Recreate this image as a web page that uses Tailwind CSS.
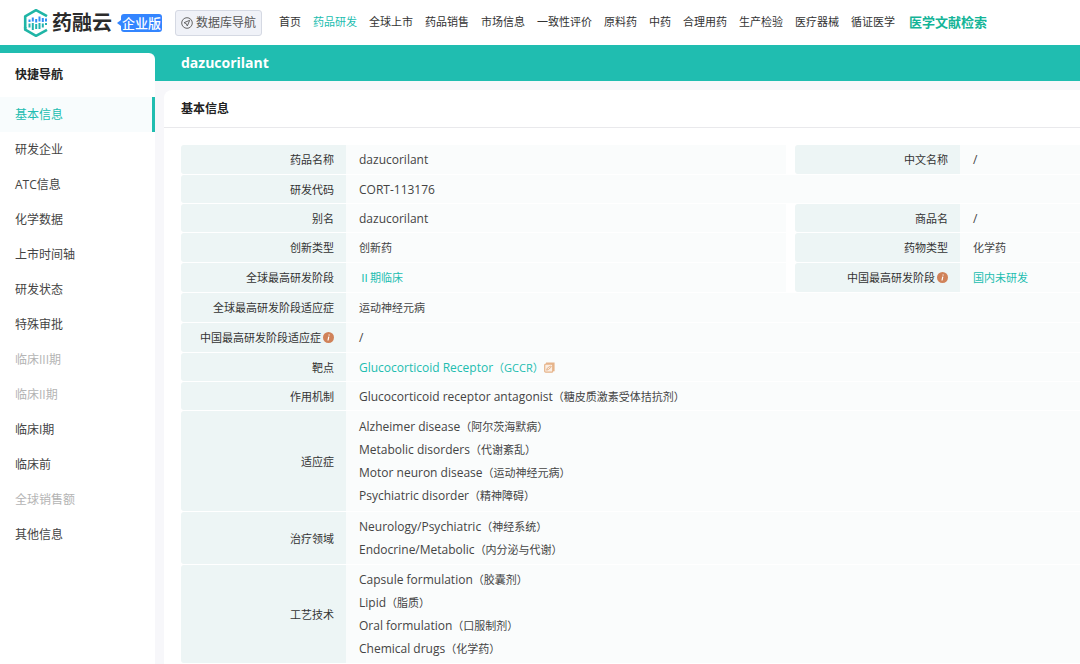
<!DOCTYPE html>
<html lang="zh-CN">
<head>
<meta charset="utf-8">
<meta name="viewport" content="width=device-width, initial-scale=1">
<title>dazucorilant</title>
<script src="https://cdn.jsdelivr.net/npm/@tailwindcss/browser@4"></script>
</head>
<body class="flex min-h-screen flex-col overflow-x-hidden bg-[#f7f7fa] font-['Open_Sans','Noto_Sans_CJK_SC',sans-serif] text-[12px] text-[#444]">
<header class="flex h-[45px] items-center whitespace-nowrap bg-white pl-[22px]">
  <a href="#" class="flex items-center" aria-label="药融云">
    <svg class="h-[30px] w-[28px]" viewBox="0 0 28 30" fill="none">
      <path d="M3.200 20.500V8.300L14 2.200l11 6" stroke="#1fb5a6" stroke-width="2.600" stroke-linejoin="round"/>
      <path d="M3.200 19v2.700L14 27.800l11-6" stroke="#1fb5a6" stroke-width="2.600" stroke-linejoin="round"/>
      <path d="M7.500 11.500v2.500M10.800 9.500v4M14.200 11v3.500M17.500 8.500v5M20.800 10v4M24 10.500v3" stroke="#2f8ff5" stroke-width="2"/>
      <path d="M7.500 15.500v4M10.800 15v7M14.200 16v5M17.500 15v6M20.800 15.500v4M24 15v2" stroke="#22b3b0" stroke-width="2"/>
    </svg>
    <span class="ml-[2px] text-[20px] font-bold leading-[28px] text-[#2b2b2b]">药融云</span>
    <svg class="ml-[5px] h-[6px] w-[4px]" viewBox="0 0 4 6"><path d="M4 0v6L0 3z" fill="#3385ff"/></svg>
    <span class="rounded-[3px] bg-[#3385ff] px-[1px] text-[13px] font-medium leading-[18px] text-white">企业版</span>
  </a>
  <button type="button" class="ml-[13px] flex h-[26px] items-center gap-[3px] rounded-[3px] border border-[#d5d9e3] bg-[#f0f2f8] px-[5px] text-[12px] text-[#555]">
    <svg class="size-[12px]" viewBox="0 0 12 12" fill="none" stroke="#666" stroke-width="1"><circle cx="6" cy="6" r="5.300"/><path d="M8.700 3.300L3 5.700l2.300 1 1 2.300z"/></svg>
    数据库导航
  </button>
  <nav class="ml-[17px] flex items-center gap-3 text-[11px] text-[#333]">
    <a href="#">首页</a><a href="#" class="text-[#21bdb0]">药品研发</a><a href="#">全球上市</a><a href="#">药品销售</a><a href="#">市场信息</a><a href="#">一致性评价</a><a href="#">原料药</a><a href="#">中药</a><a href="#">合理用药</a><a href="#">生产检验</a><a href="#">医疗器械</a><a href="#">循证医学</a>
    <a href="#" class="ml-[2px] text-[13px] font-bold text-[#13b497]">医学文献检索</a>
  </nav>
</header>
<div class="h-2 bg-[#20bdb0]"></div>
<div class="flex flex-1">
  <div class="flex w-[155px] shrink-0 bg-[#20bdb0]">
    <aside class="flex-1 rounded-tr-md bg-white">
      <h2 class="pl-[15px] text-[12px] font-bold leading-[44px] text-[#222]">快捷导航</h2>
      <nav class="flex flex-col leading-[35px] *:pl-[15px]">
        <a href="#" class="border-r-3 border-[#20bdb0] bg-[#f8fcfd] text-[#21bdb0]">基本信息</a>
        <a href="#">研发企业</a>
        <a href="#">ATC信息</a>
        <a href="#">化学数据</a>
        <a href="#">上市时间轴</a>
        <a href="#">研发状态</a>
        <a href="#">特殊审批</a>
        <a href="#" class="text-[#b4b4b4]">临床III期</a>
        <a href="#" class="text-[#b4b4b4]">临床II期</a>
        <a href="#">临床I期</a>
        <a href="#">临床前</a>
        <a href="#" class="text-[#b4b4b4]">全球销售额</a>
        <a href="#">其他信息</a>
      </nav>
    </aside>
  </div>
  <main class="flex min-w-0 flex-1 flex-col">
    <h1 class="h-[28px] bg-[#20bdb0] pl-[26px] text-[14px] font-bold leading-[20px] text-white">dazucorilant</h1>
    <section class="ml-[9px] mt-[9px] flex-1 rounded-tl-lg bg-white">
      <h2 class="border-b border-[#e9e9ec] pl-[17px] text-[12px] font-bold leading-[37px] text-[#222]">基本信息</h2>
      <div class="pl-[17px] pt-[16px]">
        <table class="w-full table-fixed border-separate border-spacing-x-0 border-spacing-y-px text-[12px] leading-[23px] [&_td]:bg-[#fafcfc] [&_td]:py-0 [&_td]:pl-[13px] [&_th]:rounded-l-[3px] [&_th]:bg-[#edf5f5] [&_th]:py-0 [&_th]:pr-[12px] [&_th]:text-right [&_th]:text-[11px] [&_th]:font-normal [&_th]:text-[#333]">
          <colgroup><col class="w-[165px]"><col><col class="w-[9px]"><col class="w-[165px]"><col class="w-[120px]"></colgroup>
          <tbody>
            <tr class="h-[29px]"><th scope="row">药品名称</th><td>dazucorilant</td><td class="bg-white!"></td><th scope="row">中文名称</th><td>/</td></tr>
            <tr class="h-[28px]"><th scope="row">研发代码</th><td colspan="4">CORT-113176</td></tr>
            <tr class="h-[28px]"><th scope="row">别名</th><td>dazucorilant</td><td class="bg-white!"></td><th scope="row">商品名</th><td>/</td></tr>
            <tr class="h-[29px] text-[11px]"><th scope="row">创新类型</th><td>创新药</td><td class="bg-white!"></td><th scope="row">药物类型</th><td>化学药</td></tr>
            <tr class="h-[29px] text-[11px]"><th scope="row">全球最高研发阶段</th><td><a href="#" class="text-[#21bdb0]">Ⅱ期临床</a></td><td class="bg-white!"></td>
              <th scope="row"><span class="inline-flex items-center gap-[2px]">中国最高研发阶段<svg class="size-[11px]" viewBox="0 0 11 11"><circle cx="5.500" cy="5.500" r="5.500" fill="#d08259"/><path d="M6.100 2.400v1.100M5.800 4.700L5 8.500" stroke="#fff" stroke-width="1.200"/></svg></span></th>
              <td><a href="#" class="text-[#21bdb0]">国内未研发</a></td></tr>
            <tr class="h-[29px] text-[11px]"><th scope="row">全球最高研发阶段适应症</th><td colspan="4">运动神经元病</td></tr>
            <tr class="h-[29px]"><th scope="row"><span class="inline-flex items-center gap-[2px]">中国最高研发阶段适应症<svg class="size-[11px]" viewBox="0 0 11 11"><circle cx="5.500" cy="5.500" r="5.500" fill="#d08259"/><path d="M6.100 2.400v1.100M5.800 4.700L5 8.500" stroke="#fff" stroke-width="1.200"/></svg></span></th><td colspan="4">/</td></tr>
            <tr class="h-[28px]"><th scope="row">靶点</th><td colspan="4"><a href="#" class="inline-flex items-center align-top text-[#21bdb0]">Glucocorticoid Receptor<span class="text-[11px]">（GCCR）</span><svg class="size-[11px]" viewBox="0 0 11 11" fill="none" stroke="#e6b48b"><path d="M2 1.500h7.700v7.800" stroke-width="1.800"/><rect x=".7" y="2.200" width="8" height="8" rx="1" fill="#fbeee3" stroke-width="1.200"/><path d="M2.600 8.200l.8-2.200 3.300-2 .6 1-3 2.600z" stroke-width="1"/></svg></a></td></tr>
            <tr class="h-[28px]"><th scope="row">作用机制</th><td colspan="4">Glucocorticoid receptor antagonist<span class="text-[11px]">（糖皮质激素受体拮抗剂）</span></td></tr>
            <tr class="h-[100px]"><th scope="row">适应症</th><td colspan="4"><p>Alzheimer disease<span class="text-[11px]">（阿尔茨海默病）</span></p><p>Metabolic disorders<span class="text-[11px]">（代谢紊乱）</span></p><p>Motor neuron disease<span class="text-[11px]">（运动神经元病）</span></p><p>Psychiatric disorder<span class="text-[11px]">（精神障碍）</span></p></td></tr>
            <tr class="h-[52px]"><th scope="row">治疗领域</th><td colspan="4"><p>Neurology/Psychiatric<span class="text-[11px]">（神经系统）</span></p><p>Endocrine/Metabolic<span class="text-[11px]">（内分泌与代谢）</span></p></td></tr>
            <tr class="h-[98px]"><th scope="row">工艺技术</th><td colspan="4"><p>Capsule formulation<span class="text-[11px]">（胶囊剂）</span></p><p>Lipid<span class="text-[11px]">（脂质）</span></p><p>Oral formulation<span class="text-[11px]">（口服制剂）</span></p><p>Chemical drugs<span class="text-[11px]">（化学药）</span></p></td></tr>
          </tbody>
        </table>
      </div>
    </section>
  </main>
</div>
</body>
</html>
